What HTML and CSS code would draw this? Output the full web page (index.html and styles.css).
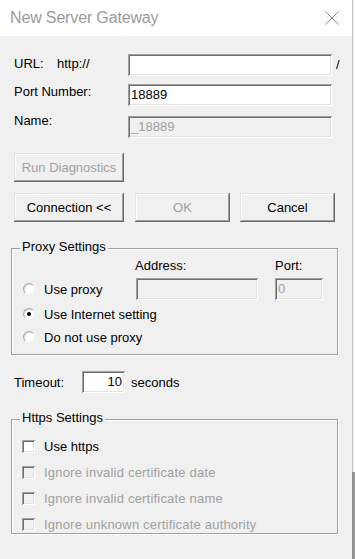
FILE: index.html
```html
<!DOCTYPE html>
<html>
<head>
<meta charset="utf-8">
<title>New Server Gateway</title>
<link rel="stylesheet" href="styles.css">
</head>
<body>
<div class="screen">
  <div class="window">
    <div class="titlebar">
      <span class="title">New Server Gateway</span>
      <svg class="close" width="14" height="14" viewBox="0 0 14 14"><path d="M0.5 0.5 L13.5 13.5 M13.5 0.5 L0.5 13.5" stroke="#8a8a8a" stroke-width="1" fill="none"/></svg>
    </div>
    <div class="content">
      <div class="field-row">
        <div class="lbl-area lbl-url-area"><span class="lbl-url">URL:</span><span>http://</span></div>
        <div class="input input-wide"></div>
        <span class="slash">/</span>
      </div>
      <div class="field-row row-port">
        <div class="lbl-area">Port Number:</div>
        <div class="input input-wide">18889</div>
      </div>
      <div class="field-row row-name">
        <div class="lbl-area lbl-name-area">Name:</div>
        <div class="input input-wide input-dis">_18889</div>
      </div>

      <div class="btn btn-run dis-text">Run Diagnostics</div>

      <div class="btn-row">
        <div class="btn btn-conn">Connection &lt;&lt;</div>
        <div class="btn btn-ok dis-text">OK</div>
        <div class="btn btn-cancel">Cancel</div>
      </div>

      <div class="group proxy">
        <span class="group-title">Proxy Settings</span>
        <div class="proxy-head">
          <span class="addr-lbl">Address:</span>
          <span>Port:</span>
        </div>
        <div class="proxy-row1">
          <div class="opt opt-first"><span class="radio"></span><span>Use proxy</span></div>
          <div class="input input-dis addr"></div>
          <div class="input input-dis port">0</div>
        </div>
        <div class="opt opt-row2"><span class="radio on"></span><span>Use Internet setting</span></div>
        <div class="opt opt-row3"><span class="radio"></span><span>Do not use proxy</span></div>
      </div>

      <div class="timeout">
        <span class="timeout-lbl">Timeout:</span>
        <div class="input t-input">10</div>
        <span class="seconds">seconds</span>
      </div>

      <div class="group https">
        <span class="group-title">Https Settings</span>
        <div class="chk-row"><span class="chk"></span><span>Use https</span></div>
        <div class="chk-row"><span class="chk dis"></span><span class="dis-text wide">Ignore invalid certificate date</span></div>
        <div class="chk-row"><span class="chk dis"></span><span class="dis-text wide">Ignore invalid certificate name</span></div>
        <div class="chk-row"><span class="chk dis"></span><span class="dis-text wide">Ignore unknown certificate authority</span></div>
      </div>
    </div>
  </div>
  <div class="edge"></div>
  <div class="edge2"></div>
</div>
</body>
</html>
```

FILE: styles.css
```css
* { box-sizing: border-box; }
html, body { margin: 0; padding: 0; }
body {
  background: #ffffff;
  font-family: "Liberation Sans", Arial, sans-serif;
  font-size: 13px;
  line-height: 15px;
  color: #000;
  width: 355px;
  height: 559px;
  overflow: hidden;
}
.screen { display: flex; height: 559px; }
.window { width: 352px; height: 559px; background: #f0f0f0; }
.edge { width: 1px; background: linear-gradient(#c6c6c6 0, #c6c6c6 472px, #8c8c8c 472px); }
.edge2 { width: 2px; background: linear-gradient(#f7f7f7 0, #f7f7f7 472px, #9a9a9a 472px); }

.titlebar {
  height: 36px;
  background: #fff;
  display: flex;
  align-items: center;
  justify-content: space-between;
  padding: 0 13px 0 10px;
}
.title { font-size: 16px; line-height: 36px; color: #9a9a9a; letter-spacing: -0.15px; }
.close { display: block; }

.content { padding: 18px 0 0 11px; }

.field-row { display: flex; align-items: flex-start; height: 22px; padding-left: 3px; }
.row-port { margin-top: 8px; }
.row-name { margin-top: 10px; }
.lbl-area { width: 114px; display: flex; flex: none; }
.lbl-url-area { padding-top: 2px; }
.lbl-name-area { margin-top: -3px; }
.lbl-url { width: 43px; }
.slash { margin-left: 4px; padding-top: 3px; }

.input {
  height: 22px;
  background: #fff;
  box-shadow: inset 1px 1px #a0a0a0, inset -1px -1px #ffffff, inset 2px 2px #6d6d6d, inset -2px -2px #e3e3e3;
  padding-left: 3px;
  line-height: 22px;
  white-space: nowrap;
  overflow: hidden;
  flex: none;
}
.input-wide { width: 204px; }
.input-dis { background: #f0f0f0; color: #a0a0a0; }

.btn {
  height: 29px;
  background: #f0f0f0;
  box-shadow: inset -1px -1px #696969, inset 1px 1px #e3e3e3, inset -2px -2px #a0a0a0, inset 2px 2px #ffffff;
  display: flex;
  align-items: center;
  justify-content: center;
  flex: none;
}
.btn-run { width: 110px; margin: 15px 0 0 3px; }
.btn-row { display: flex; margin: 11px 0 0 3px; }
.btn-conn { width: 110px; }
.btn-ok { width: 95px; margin-left: 11px; }
.btn-cancel { width: 95px; margin-left: 10px; }
.dis-text { color: #a0a0a0; }
.wide { letter-spacing: 0.2px; }

.group {
  position: relative;
  width: 327px;
  border: 1px solid #a0a0a0;
  box-shadow: inset 1px 1px #ffffff, 1px 1px #ffffff;
}
.group-title {
  position: absolute;
  top: -10px;
  left: 8px;
  padding: 0 2px;
  background: #f0f0f0;
}

.proxy { margin-top: 26px; padding: 9px 0 7px 10px; }
.proxy-head { display: flex; height: 15px; padding-left: 113px; }
.addr-lbl { width: 140px; }
.proxy-row1 { display: flex; align-items: center; height: 22px; margin-top: 5px; }
.opt { display: flex; align-items: center; }
.opt-first { width: 114px; flex: none; }
.addr { width: 122px; margin-right: 17px; }
.port { width: 48px; }
.opt-row2 { height: 20px; margin-top: 4px; }
.opt-row3 { height: 20px; margin-top: 3px; }

.radio {
  position: relative;
  width: 12px;
  height: 12px;
  flex: none;
  border-radius: 50%;
  background: #fff;
  border: 1px solid;
  border-color: #a8a8a8 #f4f4f4 #f4f4f4 #a8a8a8;
  box-shadow: inset 1px 1px 0 #dadada;
  margin: 0 9px 0 1px;
}
.radio.on::after {
  content: "";
  position: absolute;
  left: 3px;
  top: 3px;
  width: 4px;
  height: 4px;
  border-radius: 50%;
  background: #000;
}

.timeout { display: flex; align-items: center; height: 22px; margin: 16px 0 0 3px; }
.timeout-lbl { width: 68px; flex: none; }
.t-input { width: 43px; text-align: right; padding-right: 3px; }
.seconds { margin-left: 6px; }

.https { margin-top: 26px; padding: 18px 0 1px 10px; }
.chk-row { display: flex; align-items: center; height: 16px; }
.chk-row + .chk-row { margin-top: 10px; }
.chk {
  width: 13px;
  height: 13px;
  flex: none;
  background: #fff;
  box-shadow: inset 1px 1px #a0a0a0, inset -1px -1px #ffffff, inset 2px 2px #6d6d6d, inset -2px -2px #e3e3e3;
  margin-right: 9px;
}
.chk.dis { background: #f0f0f0; }
```
